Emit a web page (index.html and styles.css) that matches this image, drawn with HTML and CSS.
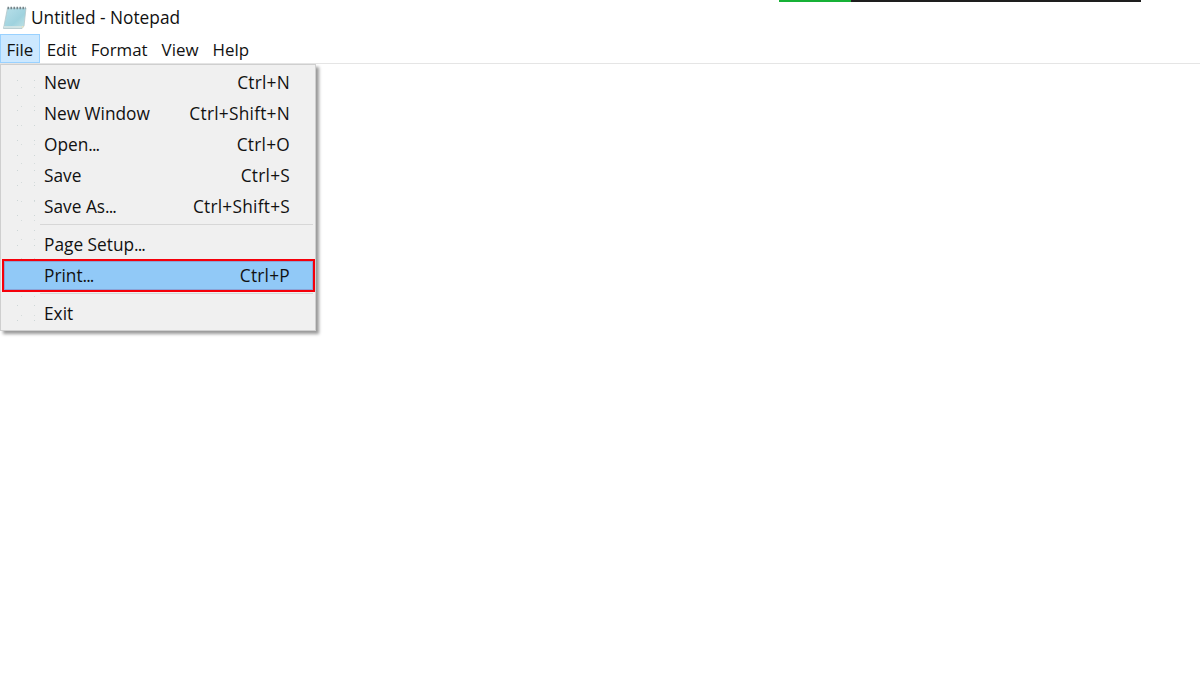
FILE: index.html
```html
<!DOCTYPE html>
<html lang="en">
<head>
    <meta charset="UTF-8">
    <title>Untitled - Notepad</title>
    <link rel="stylesheet" href="styles.css">
</head>
<body>

<div class="progress">
    <div class="progress-done"></div>
</div>

<div class="titlebar">
    <svg class="app-icon" width="24" height="24" viewBox="0 0 24 24">
        <defs>
            <linearGradient id="pad" x1="0" y1="0" x2="1" y2="1">
                <stop offset="0" stop-color="#b9e0ea"/>
                <stop offset="0.6" stop-color="#9fd2de"/>
                <stop offset="1" stop-color="#c4e4e6"/>
            </linearGradient>
        </defs>
        <path d="M4.500 3 L23 3 L21 21 L19 23.500 L0.500 23.500 Z" fill="url(#pad)" stroke="#b4c6ca" stroke-width="0.8"/>
        <path d="M4.500 3 L23 3" stroke="#76858a" stroke-width="2.400" stroke-dasharray="1.500 1.500"/>
        <path d="M21 21 L19 23.500 L18.500 21 Z" fill="#e8e4c4"/>
        <path d="M1 22 L18.500 22" stroke="#dbe7e6" stroke-width="1.600"/>
    </svg>
    <span>Untitled - Notepad</span>
</div>

<div class="menubar">
    <div class="menubar-item active">File</div>
    <div class="menubar-item">Edit</div>
    <div class="menubar-item">Format</div>
    <div class="menubar-item">View</div>
    <div class="menubar-item">Help</div>
</div>

<!-- File dropdown -->
<div class="menu">
    <div class="menu-item"><span>New</span><span class="shortcut">Ctrl+N</span></div>
    <div class="menu-item"><span>New Window</span><span class="shortcut">Ctrl+Shift+N</span></div>
    <div class="menu-item"><span>Open<span class="dots">...</span></span><span class="shortcut">Ctrl+O</span></div>
    <div class="menu-item"><span>Save</span><span class="shortcut">Ctrl+S</span></div>
    <div class="menu-item"><span>Save As<span class="dots">...</span></span><span class="shortcut">Ctrl+Shift+S</span></div>
    <div class="menu-sep"></div>
    <div class="menu-item"><span>Page Setup<span class="dots">...</span></span></div>
    <div class="menu-item selected"><span>Print<span class="dots">...</span></span><span class="shortcut">Ctrl+P</span></div>
    <div class="menu-sep after-print"></div>
    <div class="menu-item"><span>Exit</span></div>
</div>

</body>
</html>
```

FILE: styles.css
```css
html, body {
    margin: 0;
    padding: 0;
    height: 100%;
    overflow: hidden;
    background: #fff;
}

body {
    font-family: "Open Sans", "Noto Sans", sans-serif;
    font-size: 17.3px;
    color: #111;
}

.progress {
    position: absolute;
    top: 0;
    left: 779px;
    width: 362px;
    height: 2px;
    background: #1e1e1e;
}

.progress-done {
    width: 72px;
    height: 2px;
    background: #17b136;
}

.titlebar {
    height: 34px;
    display: flex;
    align-items: center;
    gap: 4px;
    padding-left: 3px;
}

.app-icon {
    flex: none;
}

.menubar {
    height: 29px;
    display: flex;
    border-bottom: 1px solid #e5e5e5;
    font-size: 16.9px;
}

.menubar-item {
    padding: 0 7px;
    line-height: 31px;
}

.menubar-item.active {
    height: 27px;
    background: #cce8ff;
    border: 1px solid #99d1ff;
    padding: 0 5.5px;
    line-height: 29px;
}

.menu {
    position: absolute;
    top: 64px;
    left: 0;
    width: 316px;
    height: 267px;
    padding: 2px 0 0;
    box-sizing: border-box;
    background-color: #f0f0f0;
    border: 1px solid #cfcfcf;
    box-shadow: 3px 3px 3px rgba(0, 0, 0, 0.4);
}

/* faint dotted gutter */
.menu::before {
    content: "";
    position: absolute;
    top: 8px;
    bottom: 8px;
    left: 8px;
    width: 27px;
    background-image:
        radial-gradient(circle, #cdd6d6 0.7px, transparent 1px),
        radial-gradient(circle, #d6dcdc 0.7px, transparent 1px);
    background-size: 17px 15px, 13px 19px;
    background-position: 0 0, 6px 5px;
}

.menu-item {
    position: relative;
    height: 31px;
    padding: 0 25px 0 43px;
    display: flex;
    align-items: center;
    justify-content: space-between;
    box-sizing: border-box;
}

.shortcut {
    letter-spacing: 0.25px;
}

/* the three dots run tighter than this font sets them */
.dots {
    letter-spacing: -0.9px;
}

.menu-item.selected {
    height: 33px;
    margin: -1px 0 0 1px;
    width: 313px;
    padding-left: 40px;
    padding-right: 23px;
    background: #91c9f7;
    border: 2px solid #f5000a;
    box-shadow: inset 0 0 0 1px #8aa2d6;
}

.menu-sep {
    height: 1px;
    margin: 2px 2px 4px 39px;
    background: #d7d7d7;
}

.menu-sep.after-print {
    margin-top: 1px;
}
```
